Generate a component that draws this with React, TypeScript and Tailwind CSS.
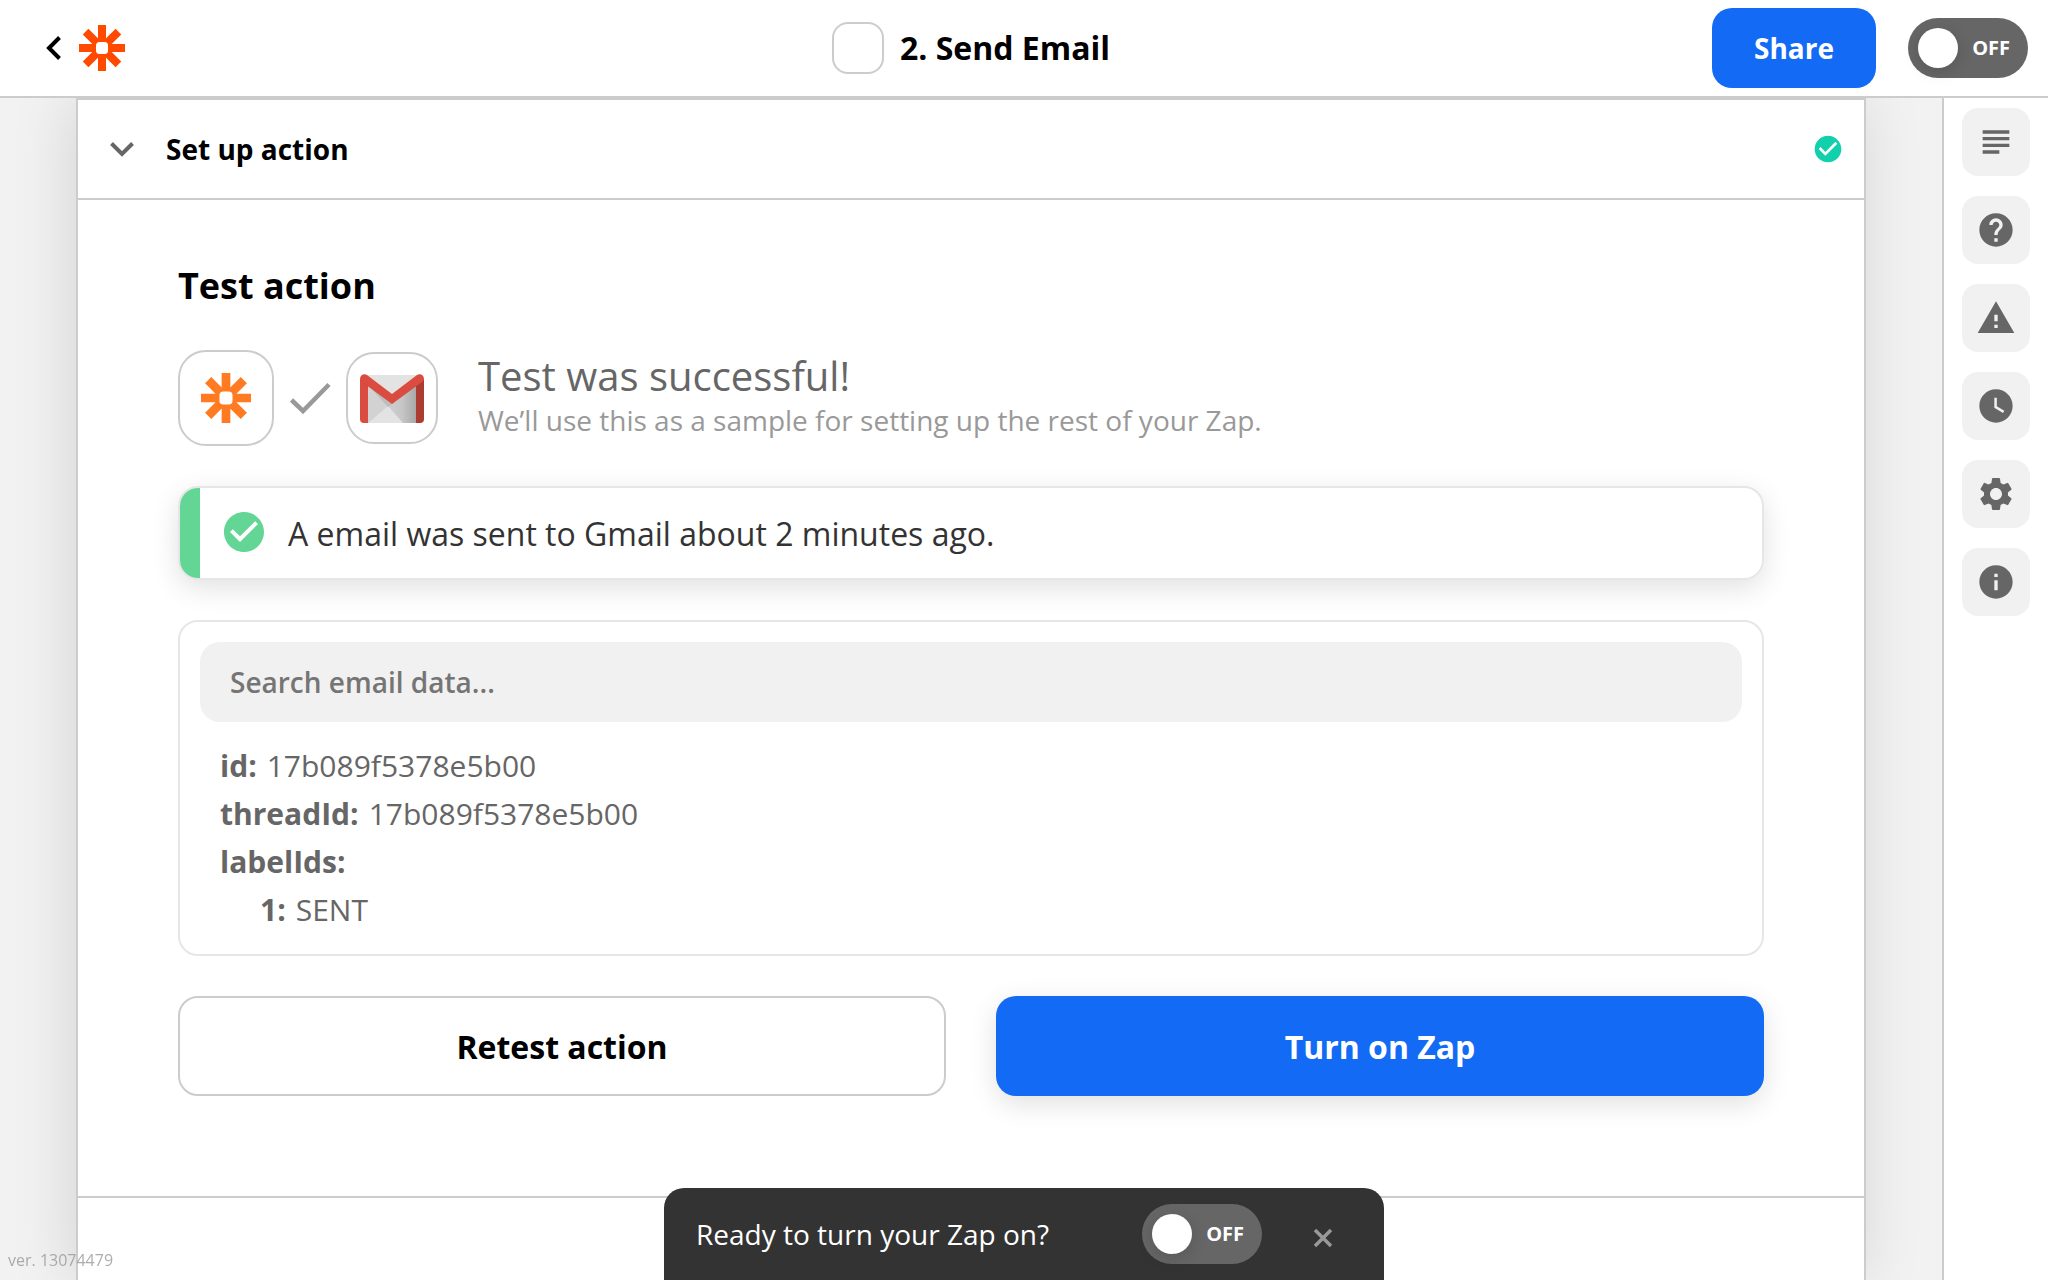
import React, { useState } from "react";
import {
  MdSubject,
  MdHelp,
  MdWarning,
  MdWatchLater,
  MdSettings,
  MdInfo,
  MdCheckCircle,
} from "react-icons/md";

function Burst({ className }: { className: string }) {
  return (
    <svg viewBox="0 0 46 46" className={className} aria-hidden="true">
      <path
        d="M23 0V46M0 23H46M6.6 6.6L39.4 39.4M39.4 6.6L6.6 39.4"
        stroke="currentColor"
        strokeWidth="8"
      />
      <rect x="17" y="17" width="12" height="12" rx="3.5" fill="#fff" />
    </svg>
  );
}

function GmailLogo() {
  return (
    <svg viewBox="0 0 64 49" className="h-[49px] w-16" aria-hidden="true">
      <defs>
        <linearGradient id="fold" x1="0" x2="1" y1="0" y2="0">
          <stop offset="0" stopColor="#cfcfcf" />
          <stop offset="0.5" stopColor="#c6c6c6" />
          <stop offset="1" stopColor="#a8a8a8" />
        </linearGradient>
      </defs>
      <path d="M3 1H61L56 49H4Z" fill="#e3e3e3" />
      <path d="M28 32L56 10V49H43Z" fill="url(#fold)" />
      <path d="M8 10L28 32L8 49Z" fill="#d2d2d2" />
      <path d="M8 11L34 29L28 33Z" fill="#bdbdbd" />
      <path d="M0 5V45a4 4 0 0 0 4 4H8V10Z" fill="#d94c3f" />
      <path d="M56 49h4a4 4 0 0 0 4-4V5L56 11Z" fill="#ac3b31" />
      <path d="M0 6L8 13V10L2 7Z" fill="#c8402f" />
      <path d="M0 5C0 1 4-1 7 1L32 20L57 1C60-1 64 1 64 5C64 6 63 7 62 8L32 30L2 8C1 7 0 6 0 5Z" fill="#d94c3f" />
    </svg>
  );
}

function Toggle({ label }: { label: string }) {
  const [on, setOn] = useState(false);
  return (
    <label className="flex h-[60px] w-[120px] shrink-0 cursor-pointer items-center justify-between rounded-full bg-[#666] pr-[18px] pl-[10px] text-white">
      <input
        type="checkbox"
        role="switch"
        aria-label={label}
        checked={on}
        onChange={() => setOn(!on)}
        className="size-10 appearance-none rounded-full bg-white shadow-[0_4px_16px_rgba(0,0,0,0.15)]"
      />
      <span className="text-xl font-bold">{on ? "ON" : "OFF"}</span>
    </label>
  );
}

const tools = [
  { label: "Outline", Icon: MdSubject },
  { label: "Help", Icon: MdHelp },
  { label: "Alerts", Icon: MdWarning },
  { label: "History", Icon: MdWatchLater },
  { label: "Settings", Icon: MdSettings },
  { label: "Info", Icon: MdInfo },
];

function Header() {
  return (
    <header className="relative z-10 flex items-center border-b-2 border-[#ccc] bg-white px-5 py-2">
      <div className="flex flex-1 items-center gap-[18px]">
        <button aria-label="Back" className="ml-[26px] text-black">
          <svg viewBox="0 0 15 24" className="h-6 w-[15px]" fill="none" stroke="currentColor" strokeWidth="4" aria-hidden="true">
            <path d="M13.5 1.5L3 12L13.5 22.5" />
          </svg>
        </button>
        <a href="#home" aria-label="Home">
          <Burst className="size-[46px] text-[#ff4a00]" />
        </a>
      </div>
      <div className="mr-[106px] flex items-center gap-4">
        <div className="size-[52px] rounded-2xl border-2 border-[#ccc]" />
        <h1 className="text-[32px] leading-10 font-bold">2. Send Email</h1>
      </div>
      <div className="flex flex-1 items-center justify-end gap-8">
        <button className="h-20 w-[164px] rounded-[20px] bg-[#136bf5] text-[28px] font-bold text-white">Share</button>
        <Toggle label="Zap status" />
      </div>
    </header>
  );
}

function Sidebar() {
  return (
    <aside className="z-10 flex flex-col gap-5 border-l-2 border-[#ccc] bg-white px-[18px] py-[10px]">
      {tools.map(({ label, Icon }) => (
        <button key={label} aria-label={label} className="flex size-[68px] items-center justify-center rounded-2xl bg-[#f1f1f1] text-[#666]">
          <Icon className="size-10" />
        </button>
      ))}
    </aside>
  );
}

function DataRow({ name, value }: { name: string; value?: string }) {
  return (
    <div className="flex gap-[10px]">
      <dt className="font-bold">{name}:</dt>
      {value && <dd>{value}</dd>}
    </div>
  );
}

function TestAction() {
  return (
    <section className="border-b-2 border-[#ccc] px-[100px] pt-16 pb-[100px]">
      <h2 className="text-4xl leading-[44px] font-bold">Test action</h2>

      <div className="mt-[42px] flex items-center">
        <div className="flex size-24 items-center justify-center rounded-[28px] border-2 border-[#ccc]">
          <Burst className="size-[50px] text-[#ff7a21]" />
        </div>
        <svg viewBox="0 0 42 32" className="mx-[15px] h-8 w-[42px]" fill="none" stroke="#999" strokeWidth="4.5" aria-hidden="true">
          <path d="M2.5 18L14 29L40 2.5" />
        </svg>
        <div className="flex size-[92px] items-center justify-center rounded-[28px] border-2 border-[#ccc]">
          <GmailLogo />
        </div>
        <div className="ml-10 pb-1">
          <p className="text-[40px] leading-[48px] text-[#666]">Test was successful!</p>
          <p className="text-[28px] leading-10 text-[#999]">We’ll use this as a sample for setting up the rest of your Zap.</p>
        </div>
      </div>

      <div className="mt-10 flex h-[94px] items-center overflow-hidden rounded-[20px] border-2 border-[#e6e6e6] shadow-[0_8px_28px_rgba(0,0,0,0.12)]">
        <div className="w-5 self-stretch bg-[#63d695]" />
        <MdCheckCircle className="mb-[2px] ml-5 size-12 text-[#63d695]" />
        <p className="ml-5 pt-[2px] text-[32px] leading-10 text-[#333]">A email was sent to Gmail about 2 minutes ago.</p>
      </div>

      <div className="mt-10 rounded-[20px] border-2 border-[#e6e6e6] p-5">
        <input
          type="search"
          aria-label="Search email data"
          placeholder="Search email data..."
          className="h-20 w-full rounded-[20px] bg-[#f1f1f1] px-[30px] text-[28px] font-semibold placeholder:text-[#757575]"
        />
        <dl className="mt-5 px-5 text-[30px] leading-[48px] text-[#666]">
          <DataRow name="id" value="17b089f5378e5b00" />
          <DataRow name="threadId" value="17b089f5378e5b00" />
          <DataRow name="labelIds" />
          <div className="pl-10">
            <DataRow name="1" value="SENT" />
          </div>
        </dl>
      </div>

      <div className="mt-10 grid grid-cols-2 gap-[50px]">
        <button className="h-[100px] rounded-[20px] border-2 border-[#ccc] bg-white pt-[2px] text-[32px] font-bold">Retest action</button>
        <button className="h-[100px] rounded-[20px] bg-[#136bf5] pt-[2px] text-[32px] font-bold text-white shadow-[0_8px_28px_rgba(0,0,0,0.12)]">
          Turn on Zap
        </button>
      </div>
    </section>
  );
}

export default function App() {
  const [promptOpen, setPromptOpen] = useState(true);
  return (
    <div className="flex min-h-screen flex-col bg-[#f2f2f2] font-['Open_Sans',sans-serif] text-black">
      <Header />
      <div className="flex flex-1">
        <main className="flex flex-1 flex-col px-[76px]">
          <div className="flex flex-1 flex-col border-x-2 border-t-2 border-[#ccc] bg-white shadow-[-4px_0_60px_rgba(0,0,0,0.12)]">
            <button className="flex h-[100px] items-center border-b-2 border-[#ccc] pr-5 pl-8 text-left">
              <svg viewBox="0 0 24 16" className="h-4 w-6" fill="none" stroke="#666" strokeWidth="4" aria-hidden="true">
                <path d="M1.5 2.5L12 13L22.5 2.5" />
              </svg>
              <span className="ml-8 flex-1 text-[28px] leading-10 font-bold">Set up action</span>
              <MdCheckCircle className="size-8 text-[#13d0ac]" />
            </button>
            <TestAction />
            <div className="flex-1" />
          </div>
        </main>
        <Sidebar />
      </div>

      <p className="fixed bottom-2 left-2 z-20 text-base leading-6 text-[#999]/80">ver. 13074479</p>

      {promptOpen && (
        <div className="fixed bottom-0 left-1/2 z-20 flex h-[92px] w-[720px] -translate-x-1/2 items-center rounded-t-[20px] bg-[#333] pr-10 pl-8 text-white">
          <p className="flex-1 text-[28px] leading-10">Ready to turn your Zap on?</p>
          <Toggle label="Turn Zap on" />
          <button aria-label="Dismiss" onClick={() => setPromptOpen(false)} className="ml-10 flex size-[42px] items-center justify-center pt-2">
            <svg viewBox="0 0 20 20" className="size-5" stroke="#999" strokeWidth="3.5" aria-hidden="true">
              <path d="M2 2L18 18M18 2L2 18" />
            </svg>
          </button>
        </div>
      )}
    </div>
  );
}
